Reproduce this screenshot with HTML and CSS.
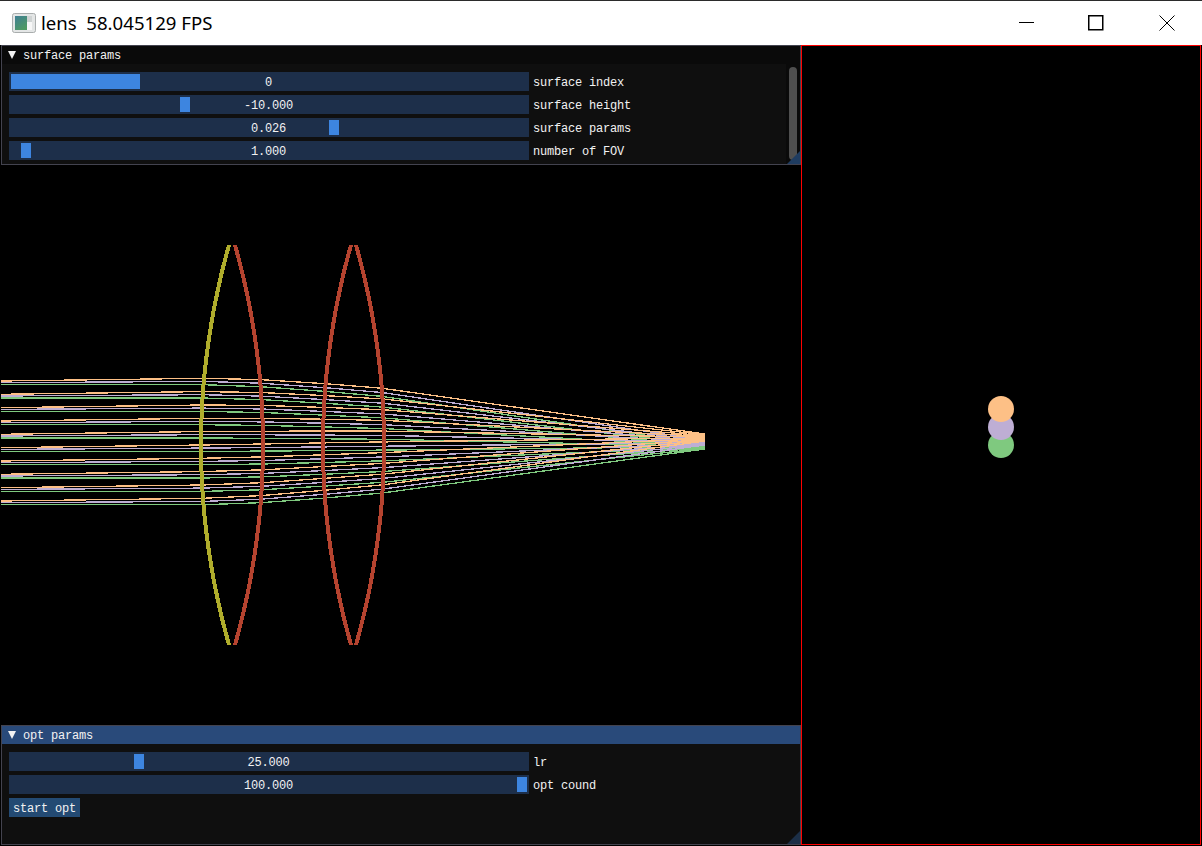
FILE: index.html
```html
<!DOCTYPE html>
<html lang="en">
<head>
	<meta charset="UTF-8">
	<title>lens</title>
	<link rel="stylesheet" href="styles.css">
</head>
<body>
	<div class="window">
		<header class="titlebar">
			<svg class="app-icon" width="24" height="20" viewBox="0 0 24 20">
				<defs>
					<linearGradient id="iconFill" x1="0" y1="0" x2="0.6" y2="1">
						<stop offset="0" stop-color="#3f7f95"/>
						<stop offset="1" stop-color="#4f9a63"/>
					</linearGradient>
				</defs>
				<rect x="0.5" y="0.5" width="23" height="19" rx="2" fill="#e4e6e6" stroke="#a9adad"/>
				<rect x="3" y="3" width="12" height="14" fill="url(#iconFill)"/>
				<rect x="15" y="9" width="5" height="8" fill="#f7f7f7"/>
				<rect x="15" y="3" width="5" height="6" fill="#cfd3d3"/>
			</svg>
			<span class="title-text">lens  58.045129 FPS</span>
			<div class="win-buttons">
				<svg class="win-btn win-min" width="16" height="16" viewBox="0 0 16 16"><path d="M0 7.5H15" stroke="#000" fill="none"/></svg>
				<svg class="win-btn" width="16" height="16" viewBox="0 0 16 16"><rect x="0.75" y="0.75" width="14" height="14" stroke="#000" stroke-width="1.5" fill="none"/></svg>
				<svg class="win-btn" width="16" height="16" viewBox="0 0 16 16"><path d="M0.5 0.5L15.5 15.5M15.5 0.5L0.5 15.5" stroke="#000" fill="none"/></svg>
			</div>
		</header>

		<main class="content">
			<div class="left-col">
				<section class="panel">
					<div class="panel-title">
						<span class="arrow"></span>
						<span>surface params</span>
					</div>
					<div class="panel-body">
						<div class="params">
							<div class="row">
								<div class="slider">
									<div class="grab" style="left:2px;width:129px"></div>
									<span class="value">0</span>
								</div>
								<span class="label">surface index</span>
							</div>
							<div class="row">
								<div class="slider">
									<div class="grab" style="left:171px;width:10px"></div>
									<span class="value">-10.000</span>
								</div>
								<span class="label">surface height</span>
							</div>
							<div class="row">
								<div class="slider">
									<div class="grab" style="left:320px;width:10px"></div>
									<span class="value">0.026</span>
								</div>
								<span class="label">surface params</span>
							</div>
							<div class="row">
								<div class="slider">
									<div class="grab" style="left:12px;width:10px"></div>
									<span class="value">1.000</span>
								</div>
								<span class="label">number of FOV</span>
							</div>
						</div>
						<div class="scrollbar"><div class="thumb"></div></div>
					</div>
					<div class="grip"></div>
				</section>

				<div class="view">
					<svg id="rays" width="800" height="560" viewBox="1 165 800 560"></svg>
				</div>

				<section class="panel">
					<div class="panel-title active">
						<span class="arrow"></span>
						<span>opt params</span>
					</div>
					<div class="panel-body">
						<div class="params">
							<div class="row">
								<div class="slider">
									<div class="grab" style="left:125px;width:10px"></div>
									<span class="value">25.000</span>
								</div>
								<span class="label">lr</span>
							</div>
							<div class="row">
								<div class="slider">
									<div class="grab" style="left:508px;width:10px"></div>
									<span class="value">100.000</span>
								</div>
								<span class="label">opt cound</span>
							</div>
							<button class="opt-btn"><span class="btn-text">start opt</span></button>
						</div>
					</div>
					<div class="grip grip-dim"></div>
				</section>
			</div>

			<div class="spot-view">
				<svg width="399" height="798" viewBox="802 46 399 798">
					<circle cx="1001" cy="445" r="13" fill="#7fc97f"/>
					<circle cx="1001" cy="427" r="13" fill="#beaed4"/>
					<circle cx="1001" cy="409" r="13" fill="#fdc086"/>
				</svg>
			</div>
		</main>
	</div>
	<script src="script.js"></script>
</body>
</html>
```

FILE: styles.css
```css
* {
	box-sizing: border-box;
}

body {
	margin: 0;
	background-color: #000;
	font-family: "Liberation Mono", monospace;
	font-size: 12px;
	letter-spacing: -0.2px;
	color: #f2f2f2;
}

.window {
	width: 1202px;
	height: 846px;
	overflow: hidden;
	background-color: #000;
}

.titlebar {
	height: 45px;
	display: flex;
	align-items: center;
	padding-left: 12px;
	background-color: #fff;
	border-top: 1px solid #2b2b2b;
	color: #000;
}

.app-icon {
	margin-top: -1px;
}

.title-text {
	margin-left: 5px;
	margin-top: -2px;
	font-family: "Noto Sans", sans-serif;
	font-size: 18.6px;
	letter-spacing: 0;
	white-space: pre;
}

.win-buttons {
	margin-left: auto;
	display: flex;
	gap: 55px;
	padding-right: 27px;
	margin-top: -1px;
}

.win-min {
	margin-right: -2px;
}

.content {
	display: flex;
	height: 800px;
	padding-left: 1px;
}

.left-col {
	width: 800px;
	display: flex;
	flex-direction: column;
}

.view {
	height: 560px;
	background-color: #000;
}

.view svg,
.spot-view svg {
	display: block;
}

.panel {
	position: relative;
	height: 120px;
	display: flex;
	flex-direction: column;
	border: 1px solid #43434f;
	background-color: #0f0f0f;
}

.panel-title {
	height: 18px;
	display: flex;
	align-items: center;
	gap: 7px;
	padding-left: 6px;
	padding-top: 2px;
	background-color: #0a0a0a;
}

.panel-title.active {
	background-color: #294a7a;
}

.arrow {
	width: 0;
	height: 0;
	border-left: 4.5px solid transparent;
	border-right: 4.5px solid transparent;
	border-top: 8px solid #f2f2f2;
	margin-top: -3px;
}

.panel-body {
	flex: 1;
	display: flex;
	min-height: 0;
}

.params {
	flex: 1;
	display: flex;
	flex-direction: column;
	align-items: flex-start;
	gap: 4px;
	padding: 8px 7px;
}

.row {
	display: flex;
	align-items: center;
	gap: 4px;
}

.label {
	padding-top: 2px;
}

.slider {
	position: relative;
	width: 520px;
	height: 19px;
	display: flex;
	align-items: center;
	justify-content: center;
	padding: 2px 1px 0 0;
	background-color: #1d2f4a;
}

.grab {
	position: absolute;
	top: 2px;
	bottom: 2px;
	background-color: #3d85e0;
}

.value {
	position: relative;
}

.opt-btn {
	height: 19px;
	width: 71px;
	padding: 2px 4px 0;
	border: none;
	background-color: #234a73;
	color: #f2f2f2;
	font: inherit;
	letter-spacing: inherit;
	text-align: left;
}

.scrollbar {
	width: 14px;
	padding: 3px 3px 4px;
	background-color: #0a0a0a;
}

.thumb {
	height: 100%;
	border-radius: 4px;
	background-color: #4f4f4f;
}

.grip {
	position: absolute;
	right: 0;
	bottom: 0;
	width: 0;
	height: 0;
	border-left: 13px solid transparent;
	border-bottom: 13px solid #1f3c60;
}

.grip-dim {
	border-bottom-color: #1c2f47;
}

.spot-view {
	width: 400px;
	height: 800px;
	border: 1px solid #f00;
}
```

FILE: script.js
```js
const NS = 'http://www.w3.org/2000/svg';
const svg = document.getElementById('rays');

// lens surfaces: x at the axis and sag sign
const C = 0.0007;
const AXIS = 445;
const surfaces = [
	{ x: 201, sag: 1, color: '#b0ad2c' },
	{ x: 263, sag: -1, color: '#b5432f' },
	{ x: 323, sag: 1, color: '#b5432f' },
	{ x: 384, sag: -1, color: '#b5432f' }
];
const heights = [1, 0.967, 0.888, 0.805];

const fields = [
	{ color: '#7fc97f', start: 444.7, slope: 0, centers: [444.7, 444.7, 444.7, 444.7], end: 446.5, spread: 2.5 },
	{ color: '#beaed4', start: 442.7, slope: -0.0067, centers: [441.4, 441.2, 441, 440.8], end: 442.5, spread: 2.5 },
	{ color: '#fdc086', start: 441, slope: -0.013, centers: [438.3, 437.6, 437, 436.5], end: 437.5, spread: 3.5 }
];

function surfaceX(s, y) {
	const d = y - AXIS;
	return s.x + s.sag * C * d * d;
}

function addPolyline(points, color, width) {
	const line = document.createElementNS(NS, 'polyline');
	line.setAttribute('points', points.map(p => p[0].toFixed(1) + ',' + p[1].toFixed(1)).join(' '));
	line.setAttribute('fill', 'none');
	line.setAttribute('stroke', color);
	line.setAttribute('stroke-width', width);
	line.setAttribute('shape-rendering', 'crispEdges');
	svg.appendChild(line);
}

for (let i = -4.5; i <= 4.5; i++) {
	const h = i * 13.33;
	fields.forEach(f => {
		const pts = [[1, f.start + h]];
		surfaces.forEach((s, k) => {
			const y = f.centers[k] + h * heights[k];
			pts.push([surfaceX(s, y), y]);
		});
		pts.push([705, f.end + f.spread * (i / 4.5)]);
		addPolyline(pts, f.color, 1.3);
	});
}

surfaces.forEach(s => {
	const pts = [];
	for (let y = 245; y <= 645; y += 10) {
		pts.push([surfaceX(s, y), y]);
	}
	addPolyline(pts, s.color, 4);
});
```
